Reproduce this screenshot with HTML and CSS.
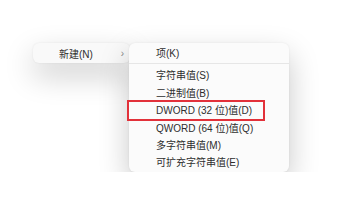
FILE: index.html
```html
<!DOCTYPE html>
<html lang="zh-CN">
<head>
    <meta charset="UTF-8">
    <meta name="viewport" content="width=device-width, initial-scale=1.0">
    <title>新建</title>
    <link rel="stylesheet" href="styles.css">
</head>
<body>
    <div class="stage">
        <div class="menu parent-menu">
            <div class="menu-item">
                <span class="label">新建(N)</span>
                <span class="chevron">&rsaquo;</span>
            </div>
        </div>
        <div class="menu sub-menu">
            <div class="sub-item first">项(K)</div>
            <div class="separator"></div>
            <div class="sub-item">字符串值(S)</div>
            <div class="sub-item">二进制值(B)</div>
            <div class="sub-item marked">
                DWORD (32 位)值(D)
                <span class="highlight-box"></span>
            </div>
            <div class="sub-item">QWORD (64 位)值(Q)</div>
            <div class="sub-item">多字符串值(M)</div>
            <div class="sub-item">可扩充字符串值(E)</div>
        </div>
    </div>
</body>
</html>
```

FILE: styles.css
```css
* {
    box-sizing: border-box;
}

body {
    margin: 0;
    background-color: #ffffff;
    font-family: "Liberation Sans", "Noto Sans CJK SC", sans-serif;
    font-size: 10px;
    color: #2e2e2e;
}

.stage {
    display: flex;
    align-items: flex-start;
    padding-top: 43px;
    padding-left: 33px;
}

.menu {
    background-color: #f9f9f9;
    border-radius: 6px;
    box-shadow: 0 12px 30px rgba(0, 0, 0, 0.22), 0 0 2px rgba(0, 0, 0, 0.08);
}

.parent-menu {
    width: 97px;
    height: 20px;
}

.menu-item {
    display: flex;
    align-items: center;
    justify-content: space-between;
    height: 20px;
    padding-left: 26px;
    padding-right: 6px;
}

.chevron {
    color: #888;
    font-size: 10px;
}

.sub-menu {
    position: relative;
    z-index: 1;
    width: 160px;
    margin-left: -1px;
    padding-bottom: 1px;
    background-color: #fbfbfb;
}

.sub-item {
    position: relative;
    display: flex;
    align-items: center;
    height: 17.4px;
    padding-left: 27px;
    white-space: nowrap;
}

.sub-item.first {
    height: 18px;
}

.separator {
    height: 1px;
    margin: 2px 0 2.3px;
    background-color: #e6e6e6;
}

.highlight-box {
    position: absolute;
    left: -2px;
    top: -1px;
    width: 138px;
    height: 21px;
    border: 2px solid #e2313a;
}
```
